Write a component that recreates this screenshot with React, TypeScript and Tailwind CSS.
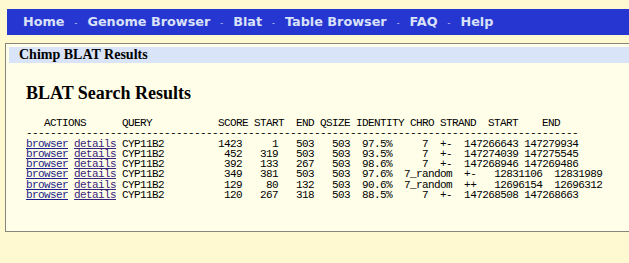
const navItems = ["Home", "Genome Browser", "Blat", "Table Browser", "FAQ", "Help"];

interface Hit {
  score: number;
  qStart: number;
  qEnd: number;
  qSize: number;
  identity: string;
  chrom: string;
  strand: string;
  tStart: number;
  tEnd: number;
}

const hits: Hit[] = [
  { score: 1423, qStart: 1, qEnd: 503, qSize: 503, identity: "97.5", chrom: "7", strand: "+-", tStart: 147266643, tEnd: 147279934 },
  { score: 452, qStart: 319, qEnd: 503, qSize: 503, identity: "93.5", chrom: "7", strand: "+-", tStart: 147274039, tEnd: 147275545 },
  { score: 392, qStart: 133, qEnd: 267, qSize: 503, identity: "98.6", chrom: "7", strand: "+-", tStart: 147268946, tEnd: 147269486 },
  { score: 349, qStart: 381, qEnd: 503, qSize: 503, identity: "97.6", chrom: "7_random", strand: "+-", tStart: 12831106, tEnd: 12831989 },
  { score: 129, qStart: 80, qEnd: 132, qSize: 503, identity: "90.6", chrom: "7_random", strand: "++", tStart: 12696154, tEnd: 12696312 },
  { score: 120, qStart: 267, qEnd: 318, qSize: 503, identity: "88.5", chrom: "7", strand: "+-", tStart: 147268508, tEnd: 147268663 },
];

const l = (v: string | number, n: number) => String(v).padStart(n);

// same layout as hgBlat's printf line
const hitLine = (h: Hit) =>
  `${"CYP11B2".padEnd(14)} ${l(h.score, 5)} ${l(h.qStart, 5)} ${l(h.qEnd, 5)} ${l(h.qSize, 5)} ${l(h.identity, 5)}%  ${l(h.chrom, 4)}  ${l(h.strand, 2)}  ${l(h.tStart, 9)} ${l(h.tEnd, 9)}`;

const header = "   ACTIONS      QUERY           SCORE START  END QSIZE IDENTITY CHRO STRAND  START    END";

const NavBar = () => (
  <nav className="ml-[7px] flex h-[26px] w-[640px] items-baseline bg-[#2636d1] pl-[16px] pt-[5px] font-['DejaVu_Sans',sans-serif] text-[12.8px] leading-[16px] font-bold text-[#d9e2f8]">
    {navItems.map((item, i) => (
      <span key={item} className="flex items-baseline">
        {i > 0 && <span className="mx-[10px] text-[8px] font-normal text-[#c8d0f0]">-</span>}
        <a href="#">{item}</a>
      </span>
    ))}
  </nav>
);

export default function App() {
  return (
    <div className="h-[263px] w-[629px] overflow-hidden bg-[#fff9d2] pt-[9px]">
      <NavBar />
      <div className="mt-[8px] ml-[5px] h-[189px] w-[700px] border border-[#86867a] bg-[#fffee8] p-[3px]">
        <div className="h-[16px] bg-[#d9e4f8] pl-[10px] font-['Liberation_Serif',serif] text-[14px] leading-[16px] font-bold text-black">
          Chimp BLAT Results
        </div>
        <div className="pl-[17px]">
          <h2 className="mt-[20px] font-['Liberation_Serif',serif] text-[18px] leading-[20px] font-bold text-black">
            BLAT Search Results
          </h2>
          <pre className="mt-[15px] font-['Liberation_Mono',monospace] text-[11px] leading-[10.3px] tracking-[-0.6px] whitespace-pre text-black">
            {header + "\n"}
            {"-".repeat(92) + "\n"}
            {hits.map((h, i) => (
              <span key={i}>
                <a href="#" className="text-[#1c1c8a] underline">browser</a>{" "}
                <a href="#" className="text-[#38237c] underline">details</a>{" "}
                {hitLine(h) + "\n"}
              </span>
            ))}
          </pre>
        </div>
      </div>
    </div>
  );
}
